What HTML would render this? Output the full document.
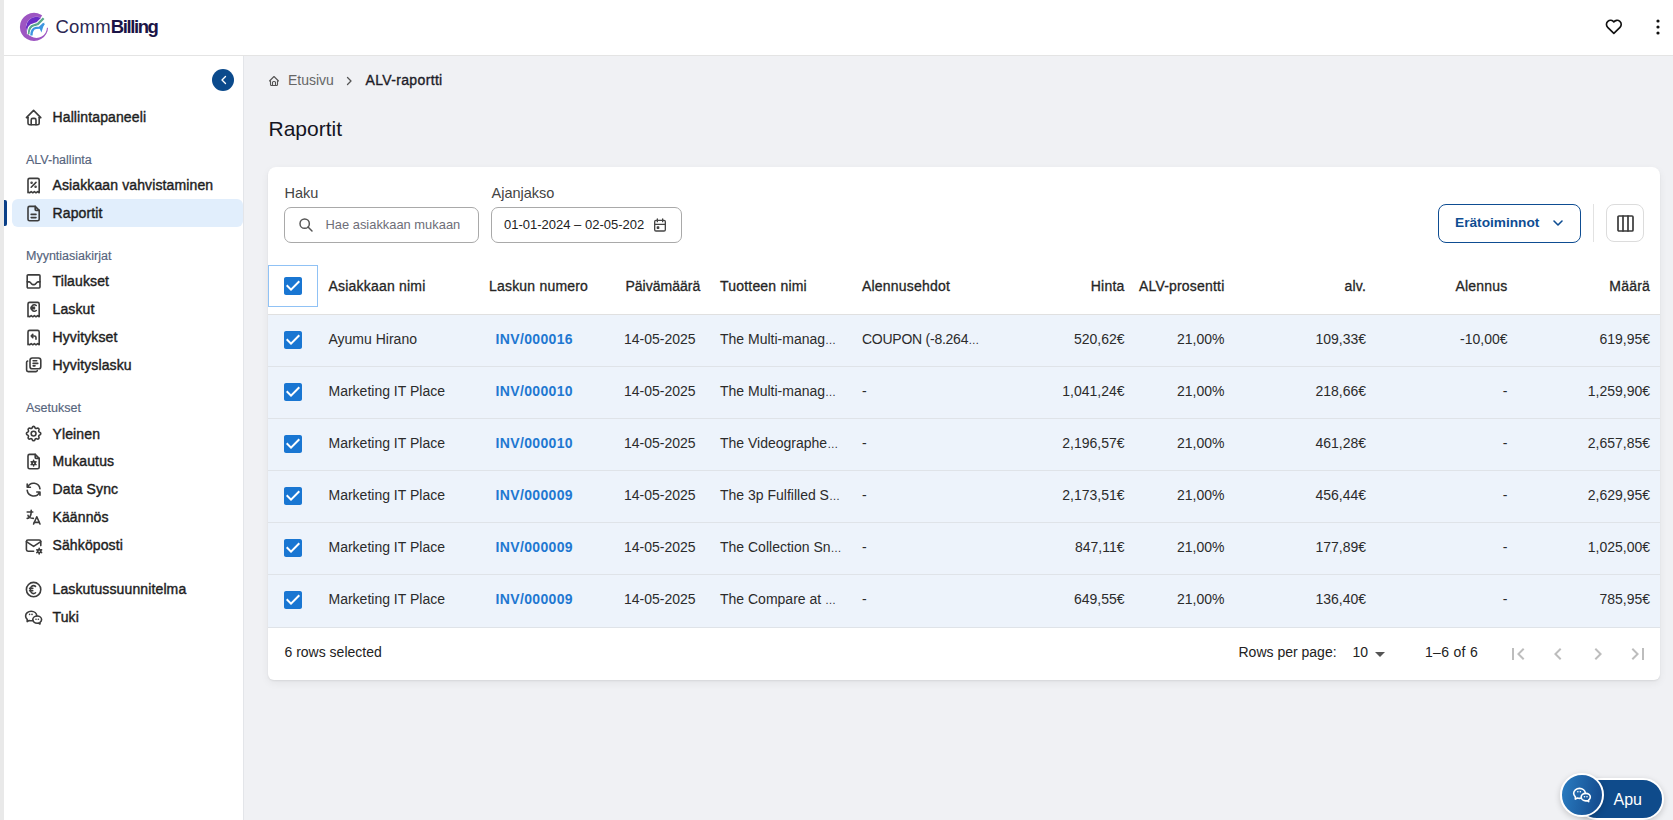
<!DOCTYPE html>
<html><head><meta charset="utf-8">
<style>
*{box-sizing:border-box;margin:0;padding:0}
html,body{width:1673px;height:820px;overflow:hidden;background:#fff;font-family:"Liberation Sans",sans-serif;color:#222;position:relative}
.t{position:absolute;white-space:nowrap}
.i{position:absolute;display:block;overflow:visible}
.b{position:absolute}
</style></head><body>
<div class="b" style="left:0;top:0;width:4px;height:820px;background:#e9e9e9"></div>
<div class="b" style="left:4px;top:0;width:1669px;height:55px;background:#fff"></div>
<div class="b" style="left:4px;top:55px;width:1669px;height:1px;background:#e4e4e4"></div>
<div class="b" style="left:4px;top:56px;width:239px;height:764px;background:#fff"></div>
<div class="b" style="left:243px;top:56px;width:1px;height:764px;background:#e3e5e9"></div>
<div class="b" style="left:244px;top:56px;width:1429px;height:764px;background:#f0f1f4"></div>
<svg class="i" style="left:19px;top:12px" width="30" height="30" viewBox="0 0 30 30">
<defs><clipPath id="ic"><circle cx="17.45" cy="15.35" r="10.55"/></clipPath>
<mask id="rm"><rect x="-5" y="-5" width="40" height="40" fill="#fff"/><path d="M15 14.9 L24.6 1.5 L40 0 L40 16.5 Z" fill="#000"/></mask></defs>
<g mask="url(#rm)"><path fill-rule="evenodd" fill="#9d55c2" d="M15 0.8a14.1 14.1 0 1 0 0.001 0Z M17.45 4.8a10.55 10.55 0 1 1 -0.001 0Z"/></g>
<g clip-path="url(#ic)"><path fill="#6b2dc6" d="M0 0 L24 0 L25 5.5 L19 11.9 L14.6 13.3 C11.5 14 10.6 16.5 9.8 22 L0 24 Z"/></g>
<path d="M9.9 22.2 C9.9 17 11.5 13.8 14.8 13.3 L18.8 12.1 L24.6 6.3" fill="none" stroke="#fff" stroke-width="4.2" stroke-linejoin="round"/>
<path d="M9.9 22.2 C9.9 17 11.5 13.8 14.8 13.3 L18.8 12.1 L24.6 6.3" fill="none" stroke="#5aa88b" stroke-width="2.3" stroke-linejoin="round"/>
<path d="M12.4 23.6 C12.4 19.2 13.8 16.4 17 15.9 L20.8 15.6 L25 11.6" fill="none" stroke="#fff" stroke-width="4" stroke-linejoin="round"/>
<path d="M12.4 23.6 C12.4 19.2 13.8 16.4 17 15.9 L20.8 15.6 L25 11.6" fill="none" stroke="#3d95e0" stroke-width="2.4" stroke-linejoin="round"/>
<path d="M20 15 L25.6 10.6 L22.4 20.6 Z" fill="#3d95e0"/>
</svg>
<div class="t" style="left:55.5px;top:15.59px;font-size:18.5px;line-height:22px;color:#1b1446;font-weight:normal;"><span style="color:#2c2752;letter-spacing:0.2px">Comm</span><b style="font-weight:bold;letter-spacing:-1.4px">Billing</b></div>
<svg class="i" style="left:1604.1px;top:17.1px;" width="19.7" height="19.7" viewBox="0 0 24 24" fill="none" stroke="#111" stroke-width="2" stroke-linecap="round" stroke-linejoin="round"><path d="M19.5 12.572l-7.5 7.428l-7.5 -7.428a5 5 0 1 1 7.5 -6.566a5 5 0 1 1 7.5 6.572"/></svg>
<svg class="i" style="left:1646px;top:15px" width="24" height="24" viewBox="0 0 24 24" fill="#111"><circle cx="12" cy="6" r="1.6"/><circle cx="12" cy="12" r="1.6"/><circle cx="12" cy="18" r="1.6"/></svg>
<div class="b" style="left:212px;top:69px;width:22px;height:22px;border-radius:50%;background:#0b4a8c"></div>
<svg class="i" style="left:217.8px;top:74px;" width="12" height="12" viewBox="0 0 12 12" fill="none" stroke="#fff" stroke-width="1.35" stroke-linecap="round" stroke-linejoin="round"><path d="M7.5 2.5 L4 6 L7.5 9.5"/></svg>
<div class="b" style="left:12px;top:199px;width:231px;height:28px;border-radius:6px;background:#e1eefc"></div>
<div class="b" style="left:4px;top:200px;width:3px;height:26px;border-radius:0 2px 2px 0;background:#0a3f87"></div>
<div class="t" style="left:52.5px;top:108.65px;font-size:14px;line-height:17px;color:#1e1e1e;font-weight:normal;-webkit-text-stroke:0.4px #1e1e1e;letter-spacing:0.12px;">Hallintapaneeli</div>
<div class="t" style="left:26px;top:152.67px;font-size:12.5px;line-height:15px;color:#56647d;font-weight:normal;-webkit-text-stroke:0.15px #56647d;">ALV-hallinta</div>
<div class="t" style="left:52.5px;top:176.65px;font-size:14px;line-height:17px;color:#1e1e1e;font-weight:normal;-webkit-text-stroke:0.4px #1e1e1e;letter-spacing:0.12px;">Asiakkaan vahvistaminen</div>
<div class="t" style="left:52.5px;top:204.65px;font-size:14px;line-height:17px;color:#1e1e1e;font-weight:normal;-webkit-text-stroke:0.4px #1e1e1e;letter-spacing:0.12px;">Raportit</div>
<div class="t" style="left:26px;top:248.97px;font-size:12.5px;line-height:15px;color:#56647d;font-weight:normal;-webkit-text-stroke:0.15px #56647d;">Myyntiasiakirjat</div>
<div class="t" style="left:52.5px;top:272.65px;font-size:14px;line-height:17px;color:#1e1e1e;font-weight:normal;-webkit-text-stroke:0.4px #1e1e1e;letter-spacing:0.12px;">Tilaukset</div>
<div class="t" style="left:52.5px;top:300.65px;font-size:14px;line-height:17px;color:#1e1e1e;font-weight:normal;-webkit-text-stroke:0.4px #1e1e1e;letter-spacing:0.12px;">Laskut</div>
<div class="t" style="left:52.5px;top:328.65px;font-size:14px;line-height:17px;color:#1e1e1e;font-weight:normal;-webkit-text-stroke:0.4px #1e1e1e;letter-spacing:0.12px;">Hyvitykset</div>
<div class="t" style="left:52.5px;top:356.65px;font-size:14px;line-height:17px;color:#1e1e1e;font-weight:normal;-webkit-text-stroke:0.4px #1e1e1e;letter-spacing:0.12px;">Hyvityslasku</div>
<div class="t" style="left:26px;top:401.37px;font-size:12.5px;line-height:15px;color:#56647d;font-weight:normal;-webkit-text-stroke:0.15px #56647d;">Asetukset</div>
<div class="t" style="left:52.5px;top:425.65px;font-size:14px;line-height:17px;color:#1e1e1e;font-weight:normal;-webkit-text-stroke:0.4px #1e1e1e;letter-spacing:0.12px;">Yleinen</div>
<div class="t" style="left:52.5px;top:453.15px;font-size:14px;line-height:17px;color:#1e1e1e;font-weight:normal;-webkit-text-stroke:0.4px #1e1e1e;letter-spacing:0.12px;">Mukautus</div>
<div class="t" style="left:52.5px;top:480.95px;font-size:14px;line-height:17px;color:#1e1e1e;font-weight:normal;-webkit-text-stroke:0.4px #1e1e1e;letter-spacing:0.12px;">Data Sync</div>
<div class="t" style="left:52.5px;top:508.85px;font-size:14px;line-height:17px;color:#1e1e1e;font-weight:normal;-webkit-text-stroke:0.4px #1e1e1e;letter-spacing:0.12px;">Käännös</div>
<div class="t" style="left:52.5px;top:537.05px;font-size:14px;line-height:17px;color:#1e1e1e;font-weight:normal;-webkit-text-stroke:0.4px #1e1e1e;letter-spacing:0.12px;">Sähköposti</div>
<div class="t" style="left:52.5px;top:581.15px;font-size:14px;line-height:17px;color:#1e1e1e;font-weight:normal;-webkit-text-stroke:0.4px #1e1e1e;letter-spacing:0.12px;">Laskutussuunnitelma</div>
<div class="t" style="left:52.5px;top:609.35px;font-size:14px;line-height:17px;color:#1e1e1e;font-weight:normal;-webkit-text-stroke:0.4px #1e1e1e;letter-spacing:0.12px;">Tuki</div>
<svg class="i" style="left:24.2px;top:107.9px;" width="19.2" height="19.2" viewBox="0 0 24 24" fill="none" stroke="#3c3c3c" stroke-width="2.0000000000000004" stroke-linecap="round" stroke-linejoin="round"><path d="M5 12l-2 0l9 -9l9 9l-2 0"/><path d="M5 12v7a2 2 0 0 0 2 2h10a2 2 0 0 0 2 -2v-7"/><path d="M9 21v-6a2 2 0 0 1 2 -2h2a2 2 0 0 1 2 2v6"/></svg>
<svg class="i" style="left:24.2px;top:175.9px;" width="19.2" height="19.2" viewBox="0 0 24 24" fill="none" stroke="#3c3c3c" stroke-width="2.0000000000000004" stroke-linecap="round" stroke-linejoin="round"><path d="M5 21v-16a2 2 0 0 1 2 -2h10a2 2 0 0 1 2 2v16l-2 -1.5l-2 1.5l-2 -1.5l-2 1.5l-2 -1.5l-2 1.5l-2 -1.5z"/><path d="M9 14l6 -6"/><circle cx="9.5" cy="8.5" r=".6" fill="#3c3c3c"/><circle cx="14.5" cy="13.5" r=".6" fill="#3c3c3c"/></svg>
<svg class="i" style="left:24.2px;top:203.9px;" width="19.2" height="19.2" viewBox="0 0 24 24" fill="none" stroke="#3c3c3c" stroke-width="2.0000000000000004" stroke-linecap="round" stroke-linejoin="round"><path d="M14 3v4a1 1 0 0 0 1 1h4"/><path d="M17 21h-10a2 2 0 0 1 -2 -2v-14a2 2 0 0 1 2 -2h7l5 5v11a2 2 0 0 1 -2 2z"/><path d="M9 17h6"/><path d="M9 13h6"/></svg>
<svg class="i" style="left:24.2px;top:271.9px;" width="19.2" height="19.2" viewBox="0 0 24 24" fill="none" stroke="#3c3c3c" stroke-width="2.0000000000000004" stroke-linecap="round" stroke-linejoin="round"><path d="M5.2 3.6h13.6a1.2 1.2 0 0 1 1.2 1.2v14a1.2 1.2 0 0 1 -1.2 1.2h-13.6a1.2 1.2 0 0 1 -1.2 -1.2v-14a1.2 1.2 0 0 1 1.2 -1.2z"/><path d="M4 12.3h2.6c1 0 1.5 .8 2.2 1.8c.7 1 1.3 1.7 2.3 1.7h1.8c1 0 1.6 -.7 2.3 -1.7c.7 -1 1.2 -1.8 2.2 -1.8h2.6"/></svg>
<svg class="i" style="left:24.2px;top:299.9px;" width="19.2" height="19.2" viewBox="0 0 24 24" fill="none" stroke="#3c3c3c" stroke-width="2.0000000000000004" stroke-linecap="round" stroke-linejoin="round"><path d="M5 21v-16a2 2 0 0 1 2 -2h10a2 2 0 0 1 2 2v16l-2 -1.5l-2 1.5l-2 -1.5l-2 1.5l-2 -1.5l-2 1.5l-2 -1.5z"/><path d="M15.3 6.9a3.6 4.1 0 1 0 0 6.2"/><path d="M8.8 9.1h4.4"/><path d="M8.8 11h4.4"/></svg>
<svg class="i" style="left:24.2px;top:327.9px;" width="19.2" height="19.2" viewBox="0 0 24 24" fill="none" stroke="#3c3c3c" stroke-width="2.0000000000000004" stroke-linecap="round" stroke-linejoin="round"><path d="M5 21v-16a2 2 0 0 1 2 -2h10a2 2 0 0 1 2 2v16l-2 -1.5l-2 1.5l-2 -1.5l-2 1.5l-2 -1.5l-2 1.5l-2 -1.5z"/><path d="M15 14v-2a2 2 0 0 0 -2 -2h-4l2 -2m0 4l-2 -2"/></svg>
<svg class="i" style="left:24.2px;top:355.9px;" width="19.2" height="19.2" viewBox="0 0 24 24" fill="none" stroke="#3c3c3c" stroke-width="2.0000000000000004" stroke-linecap="round" stroke-linejoin="round"><path d="M10.5 2.5h7.5a3 3 0 0 1 3 3v7.5a3 3 0 0 1 -3 3h-7.5a3 3 0 0 1 -3 -3v-7.5a3 3 0 0 1 3 -3z"/><path d="M4.6 6.2a2 2 0 0 0 -1.35 1.8v9.6a2 2 0 0 0 2 2h9.6a2 2 0 0 0 1.8 -1.35"/><path d="M11.4 6h4.5"/><path d="M11.4 9.25h5.8"/><path d="M11.4 12.3h2.4"/></svg>
<svg class="i" style="left:24.2px;top:423.9px;" width="19.2" height="19.2" viewBox="0 0 24 24" fill="none" stroke="#3c3c3c" stroke-width="2.0000000000000004" stroke-linecap="round" stroke-linejoin="round"><path d="M10.325 4.317c.426 -1.756 2.924 -1.756 3.35 0a1.724 1.724 0 0 0 2.573 1.066c1.543 -.94 3.31 .826 2.37 2.37a1.724 1.724 0 0 0 1.065 2.572c1.756 .426 1.756 2.924 0 3.35a1.724 1.724 0 0 0 -1.066 2.573c.94 1.543 -.826 3.31 -2.37 2.37a1.724 1.724 0 0 0 -2.572 1.065c-.426 1.756 -2.924 1.756 -3.35 0a1.724 1.724 0 0 0 -2.573 -1.066c-1.543 .94 -3.31 -.826 -2.37 -2.37a1.724 1.724 0 0 0 -1.065 -2.572c-1.756 -.426 -1.756 -2.924 0 -3.35a1.724 1.724 0 0 0 1.066 -2.573c-.94 -1.543 .826 -3.31 2.37 -2.37c1 .608 2.296 .07 2.572 -1.065z"/><circle cx="12" cy="12" r="3"/></svg>
<svg class="i" style="left:24.2px;top:451.9px;" width="19.2" height="19.2" viewBox="0 0 24 24" fill="none" stroke="#3c3c3c" stroke-width="2.0000000000000004" stroke-linecap="round" stroke-linejoin="round"><path d="M14 3v4a1 1 0 0 0 1 1h4"/><path d="M17 21h-10a2 2 0 0 1 -2 -2v-14a2 2 0 0 1 2 -2h7l5 5v11a2 2 0 0 1 -2 2z"/><path d="M12 14m-2 0a2 2 0 1 0 4 0a2 2 0 1 0 -4 0"/><path d="M12 10.5v1.5M12 16v1.5M15.031 12.25l-1.299 .75M10.268 15l-1.3 .75M15 15.803l-1.285 -.773M10.285 12.97l-1.285 -.773"/></svg>
<svg class="i" style="left:24.2px;top:479.9px;" width="19.2" height="19.2" viewBox="0 0 24 24" fill="none" stroke="#3c3c3c" stroke-width="2.0000000000000004" stroke-linecap="round" stroke-linejoin="round"><path d="M20 11a8.1 8.1 0 0 0 -15.5 -2m-.5 -4v4h4"/><path d="M4 13a8.1 8.1 0 0 0 15.5 2m.5 4v-4h-4"/></svg>
<svg class="i" style="left:24.2px;top:507.9px;" width="19.2" height="19.2" viewBox="0 0 24 24" fill="none" stroke="#3c3c3c" stroke-width="2.0000000000000004" stroke-linecap="round" stroke-linejoin="round"><path d="M4 5h7"/><path d="M9 3v2c0 4.418 -2.239 8 -5 8"/><path d="M5 9c0 2.144 2.952 3.908 6.7 4"/><path d="M12 20l4 -9l4 9"/><path d="M19.1 18h-6.2"/></svg>
<svg class="i" style="left:24.2px;top:535.9px;" width="19.2" height="19.2" viewBox="0 0 24 24" fill="none" stroke="#3c3c3c" stroke-width="2.0000000000000004" stroke-linecap="round" stroke-linejoin="round"><path d="M12 19h-7a2 2 0 0 1 -2 -2v-10a2 2 0 0 1 2 -2h14a2 2 0 0 1 2 2v5"/><path d="M3 7l9 6l9 -6"/><path d="M19.001 19m-2 0a2 2 0 1 0 4 0a2 2 0 1 0 -4 0"/><path d="M19.001 15.5v1.5M19.001 21v1.5M22.032 17.25l-1.299 .75M17.27 20l-1.3 .75M15.97 17.25l1.3 .75M20.733 20l1.3 .75"/></svg>
<svg class="i" style="left:24.2px;top:579.9px;" width="19.2" height="19.2" viewBox="0 0 24 24" fill="none" stroke="#3c3c3c" stroke-width="2.0000000000000004" stroke-linecap="round" stroke-linejoin="round"><circle cx="12" cy="12" r="9"/><path d="M14.401 8c-.669 -.628 -1.5 -1 -2.401 -1c-2.21 0 -4 2.239 -4 5s1.79 5 4 5c.9 0 1.731 -.372 2.4 -1"/><path d="M7 10.5h4"/><path d="M7 13.5h4"/></svg>
<svg class="i" style="left:24.2px;top:607.9px;" width="19.2" height="19.2" viewBox="0 0 24 24" fill="none" stroke="#3c3c3c" stroke-width="2.0000000000000004" stroke-linecap="round" stroke-linejoin="round"><path d="M16.5 10c3.038 0 5.5 2.015 5.5 4.5c0 1.397 -.778 2.645 -2 3.47l0 2.03l-1.964 -1.178a6.649 6.649 0 0 1 -1.536 .178c-3.038 0 -5.5 -2.015 -5.5 -4.5s2.462 -4.5 5.5 -4.5z"/><path d="M11.197 15.698c-.69 .196 -1.43 .302 -2.197 .302a8.008 8.008 0 0 1 -2.612 -.432l-2.388 1.432v-2.801c-1.237 -1.082 -2 -2.564 -2 -4.199c0 -3.314 3.134 -6 7 -6c3.782 0 6.863 2.57 7 5.785l0 .233"/><path d="M10 8h.01"/><path d="M7 8h.01"/><path d="M15 14h.01"/><path d="M18 14h.01"/></svg>
<svg class="i" style="left:268px;top:74.5px;" width="12" height="12" viewBox="0 0 24 24" fill="none" stroke="#555" stroke-width="2.2" stroke-linecap="round" stroke-linejoin="round"><path d="M5 12l-2 0l9 -9l9 9l-2 0"/><path d="M5 12v7a2 2 0 0 0 2 2h10a2 2 0 0 0 2 -2v-7"/><path d="M9 21v-6a2 2 0 0 1 2 -2h2a2 2 0 0 1 2 2v6"/></svg>
<div class="t" style="left:288px;top:71.85px;font-size:14px;line-height:17px;color:#666;font-weight:normal;">Etusivu</div>
<svg class="i" style="left:343px;top:74.6px;" width="12" height="12" viewBox="0 0 12 12" fill="none" stroke="#555" stroke-width="1.3" stroke-linecap="round" stroke-linejoin="round"><path d="M4.5 2.5 L8 6 L4.5 9.5"/></svg>
<div class="t" style="left:365.5px;top:71.85px;font-size:14px;line-height:17px;color:#1c1c28;font-weight:normal;-webkit-text-stroke:0.35px #1c1c28;letter-spacing:0.35px;">ALV-raportti</div>
<div class="t" style="left:268.5px;top:116.22px;font-size:21px;line-height:25px;color:#15151f;font-weight:normal;">Raportit</div>
<div class="b" style="left:268px;top:167px;width:1392px;height:513px;background:#fff;border-radius:8px 8px 6px 6px;box-shadow:0 1px 2px rgba(0,0,0,.07),0 3px 8px rgba(0,0,0,.06)"></div>
<div class="t" style="left:284.5px;top:184.98px;font-size:14.5px;line-height:17px;color:#444;font-weight:normal;">Haku</div>
<div class="t" style="left:491.5px;top:184.98px;font-size:14.5px;line-height:17px;color:#444;font-weight:normal;">Ajanjakso</div>
<div class="b" style="left:284px;top:207px;width:195px;height:36px;border:1px solid #a9a9a9;border-radius:7px"></div>
<svg class="i" style="left:297.5px;top:216.6px;" width="16" height="16" viewBox="0 0 24 24" fill="none" stroke="#555" stroke-width="2.2" stroke-linecap="round" stroke-linejoin="round"><path d="M10 10m-7 0a7 7 0 1 0 14 0a7 7 0 1 0 -14 0"/><path d="M21 21l-6 -6"/></svg>
<div class="t" style="left:325.5px;top:217.43px;font-size:12.9px;line-height:15px;color:#6e6e78;font-weight:normal;">Hae asiakkaan mukaan</div>
<div class="b" style="left:491px;top:207px;width:191px;height:36px;border:1px solid #a9a9a9;border-radius:7px"></div>
<div class="t" style="left:504px;top:216.90px;font-size:13px;line-height:16px;color:#222;font-weight:normal;">01-01-2024 – 02-05-202</div>
<svg class="i" style="left:652px;top:217px;" width="16" height="16" viewBox="0 0 24 24" fill="none" stroke="#444" stroke-width="2" stroke-linecap="round" stroke-linejoin="round"><path d="M4 7a2 2 0 0 1 2 -2h12a2 2 0 0 1 2 2v12a2 2 0 0 1 -2 2h-12a2 2 0 0 1 -2 -2z"/><path d="M16 3v4"/><path d="M8 3v4"/><path d="M4 11h16"/><path d="M8 15h2v2h-2z"/></svg>
<div class="b" style="left:1438px;top:204px;width:143px;height:39px;border:1.5px solid #0e4d92;border-radius:8px"></div>
<div class="t" style="left:1455px;top:214.85px;font-size:13.7px;line-height:16px;color:#0e4d92;font-weight:bold;">Erätoiminnot</div>
<svg class="i" style="left:1550px;top:214.6px;" width="16" height="16" viewBox="0 0 24 24" fill="none" stroke="#0e4d92" stroke-width="2.4" stroke-linecap="round" stroke-linejoin="round"><path d="M6 9l6 6l6 -6"/></svg>
<div class="b" style="left:1593px;top:204px;width:1px;height:38px;background:#e2e2e2"></div>
<div class="b" style="left:1606px;top:204px;width:38px;height:38px;border:1px solid #dcdcdc;border-radius:8px"></div>
<svg class="i" style="left:1616.5px;top:214.5px;" width="17" height="17" viewBox="0 0 17 17" fill="none" stroke="#3a3a3a" stroke-width="1.7" stroke-linecap="round" stroke-linejoin="round"><rect x="1" y="1" width="15" height="15" rx="1"/><path d="M6 1v15M11 1v15"/></svg>
<div class="b" style="left:268px;top:265px;width:50px;height:42px;border:1px solid #90c2f5"></div>
<div class="b" style="left:268px;top:314px;width:1392px;height:1px;background:#e0e0e0"></div>
<svg class="i" style="left:281px;top:274px" width="24" height="24" viewBox="0 0 24 24"><rect x="4" y="4" width="16" height="16" fill="#fff"/><path fill="#1976d2" d="M19 3H5c-1.11 0-2 .9-2 2v14c0 1.1.89 2 2 2h14c1.11 0 2-.9 2-2V5c0-1.1-.89-2-2-2zm-9 14l-5-5 1.41-1.41L10 14.17l7.59-7.59L19 8l-9 9z"/></svg>
<div class="t" style="left:328.5px;top:278.15px;font-size:14px;line-height:17px;color:#262626;font-weight:normal;-webkit-text-stroke:0.3px #262626;letter-spacing:0.2px;">Asiakkaan nimi</div>
<div class="t" style="left:489px;top:278.15px;font-size:14px;line-height:17px;color:#262626;font-weight:normal;-webkit-text-stroke:0.3px #262626;letter-spacing:0.2px;">Laskun numero</div>
<div class="t" style="left:625.5px;top:278.15px;font-size:14px;line-height:17px;color:#262626;font-weight:normal;-webkit-text-stroke:0.3px #262626;">Päivämäärä</div>
<div class="t" style="left:720px;top:278.15px;font-size:14px;line-height:17px;color:#262626;font-weight:normal;-webkit-text-stroke:0.3px #262626;letter-spacing:0.2px;">Tuotteen nimi</div>
<div class="t" style="left:862px;top:278.15px;font-size:14px;line-height:17px;color:#262626;font-weight:normal;-webkit-text-stroke:0.3px #262626;letter-spacing:0.2px;">Alennusehdot</div>
<div class="t" style="left:524.5px;width:600px;text-align:right;top:278.15px;font-size:14px;line-height:17px;color:#262626;font-weight:normal;-webkit-text-stroke:0.3px #262626;letter-spacing:0.2px;">Hinta</div>
<div class="t" style="left:624.5px;width:600px;text-align:right;top:278.15px;font-size:14px;line-height:17px;color:#262626;font-weight:normal;-webkit-text-stroke:0.3px #262626;letter-spacing:0.2px;">ALV-prosentti</div>
<div class="t" style="left:766px;width:600px;text-align:right;top:278.15px;font-size:14px;line-height:17px;color:#262626;font-weight:normal;-webkit-text-stroke:0.3px #262626;letter-spacing:0.2px;">alv.</div>
<div class="t" style="left:907.5px;width:600px;text-align:right;top:278.15px;font-size:14px;line-height:17px;color:#262626;font-weight:normal;-webkit-text-stroke:0.3px #262626;letter-spacing:0.2px;">Alennus</div>
<div class="t" style="left:1050px;width:600px;text-align:right;top:278.15px;font-size:14px;line-height:17px;color:#262626;font-weight:normal;-webkit-text-stroke:0.3px #262626;letter-spacing:0.2px;">Määrä</div>
<div class="b" style="left:268px;top:315px;width:1392px;height:51px;background:#edf3fb"></div>
<div class="b" style="left:268px;top:366px;width:1392px;height:1px;background:#dfe3e8"></div>
<svg class="i" style="left:281px;top:328px" width="24" height="24" viewBox="0 0 24 24"><rect x="4" y="4" width="16" height="16" fill="#fff"/><path fill="#1976d2" d="M19 3H5c-1.11 0-2 .9-2 2v14c0 1.1.89 2 2 2h14c1.11 0 2-.9 2-2V5c0-1.1-.89-2-2-2zm-9 14l-5-5 1.41-1.41L10 14.17l7.59-7.59L19 8l-9 9z"/></svg>
<div class="t" style="left:328.5px;top:330.65px;font-size:14px;line-height:17px;color:#2b2b2b;font-weight:normal;">Ayumu Hirano</div>
<div class="t" style="left:495.5px;top:330.65px;font-size:14px;line-height:17px;color:#1f78d1;font-weight:bold;letter-spacing:0.35px;">INV/000016</div>
<div class="t" style="left:624px;top:330.65px;font-size:14px;line-height:17px;color:#2b2b2b;font-weight:normal;">14-05-2025</div>
<div class="t" style="left:720px;top:330.65px;font-size:14px;line-height:17px;color:#2b2b2b;font-weight:normal;">The Multi-manag<span style="font-size:11px">…</span></div>
<div class="t" style="left:862px;top:330.65px;font-size:14px;line-height:17px;color:#2b2b2b;font-weight:normal;letter-spacing:-0.25px;">COUPON (-8.264<span style="font-size:11px">…</span></div>
<div class="t" style="left:524.5px;width:600px;text-align:right;top:330.65px;font-size:14px;line-height:17px;color:#2b2b2b;font-weight:normal;">520,62€</div>
<div class="t" style="left:624.5px;width:600px;text-align:right;top:330.65px;font-size:14px;line-height:17px;color:#2b2b2b;font-weight:normal;">21,00%</div>
<div class="t" style="left:766px;width:600px;text-align:right;top:330.65px;font-size:14px;line-height:17px;color:#2b2b2b;font-weight:normal;">109,33€</div>
<div class="t" style="left:907.5px;width:600px;text-align:right;top:330.65px;font-size:14px;line-height:17px;color:#2b2b2b;font-weight:normal;">-10,00€</div>
<div class="t" style="left:1050px;width:600px;text-align:right;top:330.65px;font-size:14px;line-height:17px;color:#2b2b2b;font-weight:normal;">619,95€</div>
<div class="b" style="left:268px;top:367px;width:1392px;height:51px;background:#edf3fb"></div>
<div class="b" style="left:268px;top:418px;width:1392px;height:1px;background:#dfe3e8"></div>
<svg class="i" style="left:281px;top:380px" width="24" height="24" viewBox="0 0 24 24"><rect x="4" y="4" width="16" height="16" fill="#fff"/><path fill="#1976d2" d="M19 3H5c-1.11 0-2 .9-2 2v14c0 1.1.89 2 2 2h14c1.11 0 2-.9 2-2V5c0-1.1-.89-2-2-2zm-9 14l-5-5 1.41-1.41L10 14.17l7.59-7.59L19 8l-9 9z"/></svg>
<div class="t" style="left:328.5px;top:382.65px;font-size:14px;line-height:17px;color:#2b2b2b;font-weight:normal;">Marketing IT Place</div>
<div class="t" style="left:495.5px;top:382.65px;font-size:14px;line-height:17px;color:#1f78d1;font-weight:bold;letter-spacing:0.35px;">INV/000010</div>
<div class="t" style="left:624px;top:382.65px;font-size:14px;line-height:17px;color:#2b2b2b;font-weight:normal;">14-05-2025</div>
<div class="t" style="left:720px;top:382.65px;font-size:14px;line-height:17px;color:#2b2b2b;font-weight:normal;">The Multi-manag<span style="font-size:11px">…</span></div>
<div class="t" style="left:862px;top:382.65px;font-size:14px;line-height:17px;color:#2b2b2b;font-weight:normal;">-</div>
<div class="t" style="left:524.5px;width:600px;text-align:right;top:382.65px;font-size:14px;line-height:17px;color:#2b2b2b;font-weight:normal;">1,041,24€</div>
<div class="t" style="left:624.5px;width:600px;text-align:right;top:382.65px;font-size:14px;line-height:17px;color:#2b2b2b;font-weight:normal;">21,00%</div>
<div class="t" style="left:766px;width:600px;text-align:right;top:382.65px;font-size:14px;line-height:17px;color:#2b2b2b;font-weight:normal;">218,66€</div>
<div class="t" style="left:907.5px;width:600px;text-align:right;top:382.65px;font-size:14px;line-height:17px;color:#2b2b2b;font-weight:normal;">-</div>
<div class="t" style="left:1050px;width:600px;text-align:right;top:382.65px;font-size:14px;line-height:17px;color:#2b2b2b;font-weight:normal;">1,259,90€</div>
<div class="b" style="left:268px;top:419px;width:1392px;height:51px;background:#edf3fb"></div>
<div class="b" style="left:268px;top:470px;width:1392px;height:1px;background:#dfe3e8"></div>
<svg class="i" style="left:281px;top:432px" width="24" height="24" viewBox="0 0 24 24"><rect x="4" y="4" width="16" height="16" fill="#fff"/><path fill="#1976d2" d="M19 3H5c-1.11 0-2 .9-2 2v14c0 1.1.89 2 2 2h14c1.11 0 2-.9 2-2V5c0-1.1-.89-2-2-2zm-9 14l-5-5 1.41-1.41L10 14.17l7.59-7.59L19 8l-9 9z"/></svg>
<div class="t" style="left:328.5px;top:434.65px;font-size:14px;line-height:17px;color:#2b2b2b;font-weight:normal;">Marketing IT Place</div>
<div class="t" style="left:495.5px;top:434.65px;font-size:14px;line-height:17px;color:#1f78d1;font-weight:bold;letter-spacing:0.35px;">INV/000010</div>
<div class="t" style="left:624px;top:434.65px;font-size:14px;line-height:17px;color:#2b2b2b;font-weight:normal;">14-05-2025</div>
<div class="t" style="left:720px;top:434.65px;font-size:14px;line-height:17px;color:#2b2b2b;font-weight:normal;">The Videographe<span style="font-size:11px">…</span></div>
<div class="t" style="left:862px;top:434.65px;font-size:14px;line-height:17px;color:#2b2b2b;font-weight:normal;">-</div>
<div class="t" style="left:524.5px;width:600px;text-align:right;top:434.65px;font-size:14px;line-height:17px;color:#2b2b2b;font-weight:normal;">2,196,57€</div>
<div class="t" style="left:624.5px;width:600px;text-align:right;top:434.65px;font-size:14px;line-height:17px;color:#2b2b2b;font-weight:normal;">21,00%</div>
<div class="t" style="left:766px;width:600px;text-align:right;top:434.65px;font-size:14px;line-height:17px;color:#2b2b2b;font-weight:normal;">461,28€</div>
<div class="t" style="left:907.5px;width:600px;text-align:right;top:434.65px;font-size:14px;line-height:17px;color:#2b2b2b;font-weight:normal;">-</div>
<div class="t" style="left:1050px;width:600px;text-align:right;top:434.65px;font-size:14px;line-height:17px;color:#2b2b2b;font-weight:normal;">2,657,85€</div>
<div class="b" style="left:268px;top:471px;width:1392px;height:51px;background:#edf3fb"></div>
<div class="b" style="left:268px;top:522px;width:1392px;height:1px;background:#dfe3e8"></div>
<svg class="i" style="left:281px;top:484px" width="24" height="24" viewBox="0 0 24 24"><rect x="4" y="4" width="16" height="16" fill="#fff"/><path fill="#1976d2" d="M19 3H5c-1.11 0-2 .9-2 2v14c0 1.1.89 2 2 2h14c1.11 0 2-.9 2-2V5c0-1.1-.89-2-2-2zm-9 14l-5-5 1.41-1.41L10 14.17l7.59-7.59L19 8l-9 9z"/></svg>
<div class="t" style="left:328.5px;top:486.65px;font-size:14px;line-height:17px;color:#2b2b2b;font-weight:normal;">Marketing IT Place</div>
<div class="t" style="left:495.5px;top:486.65px;font-size:14px;line-height:17px;color:#1f78d1;font-weight:bold;letter-spacing:0.35px;">INV/000009</div>
<div class="t" style="left:624px;top:486.65px;font-size:14px;line-height:17px;color:#2b2b2b;font-weight:normal;">14-05-2025</div>
<div class="t" style="left:720px;top:486.65px;font-size:14px;line-height:17px;color:#2b2b2b;font-weight:normal;">The 3p Fulfilled S<span style="font-size:11px">…</span></div>
<div class="t" style="left:862px;top:486.65px;font-size:14px;line-height:17px;color:#2b2b2b;font-weight:normal;">-</div>
<div class="t" style="left:524.5px;width:600px;text-align:right;top:486.65px;font-size:14px;line-height:17px;color:#2b2b2b;font-weight:normal;">2,173,51€</div>
<div class="t" style="left:624.5px;width:600px;text-align:right;top:486.65px;font-size:14px;line-height:17px;color:#2b2b2b;font-weight:normal;">21,00%</div>
<div class="t" style="left:766px;width:600px;text-align:right;top:486.65px;font-size:14px;line-height:17px;color:#2b2b2b;font-weight:normal;">456,44€</div>
<div class="t" style="left:907.5px;width:600px;text-align:right;top:486.65px;font-size:14px;line-height:17px;color:#2b2b2b;font-weight:normal;">-</div>
<div class="t" style="left:1050px;width:600px;text-align:right;top:486.65px;font-size:14px;line-height:17px;color:#2b2b2b;font-weight:normal;">2,629,95€</div>
<div class="b" style="left:268px;top:523px;width:1392px;height:51px;background:#edf3fb"></div>
<div class="b" style="left:268px;top:574px;width:1392px;height:1px;background:#dfe3e8"></div>
<svg class="i" style="left:281px;top:536px" width="24" height="24" viewBox="0 0 24 24"><rect x="4" y="4" width="16" height="16" fill="#fff"/><path fill="#1976d2" d="M19 3H5c-1.11 0-2 .9-2 2v14c0 1.1.89 2 2 2h14c1.11 0 2-.9 2-2V5c0-1.1-.89-2-2-2zm-9 14l-5-5 1.41-1.41L10 14.17l7.59-7.59L19 8l-9 9z"/></svg>
<div class="t" style="left:328.5px;top:538.65px;font-size:14px;line-height:17px;color:#2b2b2b;font-weight:normal;">Marketing IT Place</div>
<div class="t" style="left:495.5px;top:538.65px;font-size:14px;line-height:17px;color:#1f78d1;font-weight:bold;letter-spacing:0.35px;">INV/000009</div>
<div class="t" style="left:624px;top:538.65px;font-size:14px;line-height:17px;color:#2b2b2b;font-weight:normal;">14-05-2025</div>
<div class="t" style="left:720px;top:538.65px;font-size:14px;line-height:17px;color:#2b2b2b;font-weight:normal;">The Collection Sn<span style="font-size:11px">…</span></div>
<div class="t" style="left:862px;top:538.65px;font-size:14px;line-height:17px;color:#2b2b2b;font-weight:normal;">-</div>
<div class="t" style="left:524.5px;width:600px;text-align:right;top:538.65px;font-size:14px;line-height:17px;color:#2b2b2b;font-weight:normal;">847,11€</div>
<div class="t" style="left:624.5px;width:600px;text-align:right;top:538.65px;font-size:14px;line-height:17px;color:#2b2b2b;font-weight:normal;">21,00%</div>
<div class="t" style="left:766px;width:600px;text-align:right;top:538.65px;font-size:14px;line-height:17px;color:#2b2b2b;font-weight:normal;">177,89€</div>
<div class="t" style="left:907.5px;width:600px;text-align:right;top:538.65px;font-size:14px;line-height:17px;color:#2b2b2b;font-weight:normal;">-</div>
<div class="t" style="left:1050px;width:600px;text-align:right;top:538.65px;font-size:14px;line-height:17px;color:#2b2b2b;font-weight:normal;">1,025,00€</div>
<div class="b" style="left:268px;top:575px;width:1392px;height:51px;background:#edf3fb"></div>
<div class="b" style="left:268px;top:627px;width:1392px;height:1px;background:#dfe3e8"></div>
<div class="b" style="left:268px;top:626px;width:1392px;height:1px;background:#edf3fb"></div>
<svg class="i" style="left:281px;top:588px" width="24" height="24" viewBox="0 0 24 24"><rect x="4" y="4" width="16" height="16" fill="#fff"/><path fill="#1976d2" d="M19 3H5c-1.11 0-2 .9-2 2v14c0 1.1.89 2 2 2h14c1.11 0 2-.9 2-2V5c0-1.1-.89-2-2-2zm-9 14l-5-5 1.41-1.41L10 14.17l7.59-7.59L19 8l-9 9z"/></svg>
<div class="t" style="left:328.5px;top:590.65px;font-size:14px;line-height:17px;color:#2b2b2b;font-weight:normal;">Marketing IT Place</div>
<div class="t" style="left:495.5px;top:590.65px;font-size:14px;line-height:17px;color:#1f78d1;font-weight:bold;letter-spacing:0.35px;">INV/000009</div>
<div class="t" style="left:624px;top:590.65px;font-size:14px;line-height:17px;color:#2b2b2b;font-weight:normal;">14-05-2025</div>
<div class="t" style="left:720px;top:590.65px;font-size:14px;line-height:17px;color:#2b2b2b;font-weight:normal;">The Compare at <span style="font-size:11px">…</span></div>
<div class="t" style="left:862px;top:590.65px;font-size:14px;line-height:17px;color:#2b2b2b;font-weight:normal;">-</div>
<div class="t" style="left:524.5px;width:600px;text-align:right;top:590.65px;font-size:14px;line-height:17px;color:#2b2b2b;font-weight:normal;">649,55€</div>
<div class="t" style="left:624.5px;width:600px;text-align:right;top:590.65px;font-size:14px;line-height:17px;color:#2b2b2b;font-weight:normal;">21,00%</div>
<div class="t" style="left:766px;width:600px;text-align:right;top:590.65px;font-size:14px;line-height:17px;color:#2b2b2b;font-weight:normal;">136,40€</div>
<div class="t" style="left:907.5px;width:600px;text-align:right;top:590.65px;font-size:14px;line-height:17px;color:#2b2b2b;font-weight:normal;">-</div>
<div class="t" style="left:1050px;width:600px;text-align:right;top:590.65px;font-size:14px;line-height:17px;color:#2b2b2b;font-weight:normal;">785,95€</div>
<div class="t" style="left:284.5px;top:644.35px;font-size:14px;line-height:17px;color:#222;font-weight:normal;">6 rows selected</div>
<div class="t" style="left:1238.5px;top:644.35px;font-size:14px;line-height:17px;color:#222;font-weight:normal;">Rows per page:</div>
<div class="t" style="left:1352.5px;top:644.35px;font-size:14px;line-height:17px;color:#222;font-weight:normal;">10</div>
<svg class="i" style="left:1368px;top:642px" width="24" height="24" viewBox="0 0 24 24" fill="#555"><path d="M7 10l5 5 5-5z"/></svg>
<div class="t" style="left:1425px;top:644.35px;font-size:14px;line-height:17px;color:#222;font-weight:normal;letter-spacing:0.3px;">1–6 of 6</div>
<svg class="i" style="left:1506px;top:641.5px" width="24" height="24" viewBox="0 0 24 24" fill="#bdbdbd"><path d="M18.41 16.59L13.82 12l4.59-4.59L17 6l-6 6 6 6zM6 6h2v12H6z"/></svg>
<svg class="i" style="left:1546px;top:641.5px" width="24" height="24" viewBox="0 0 24 24" fill="#bdbdbd"><path d="M15.41 16.59L10.83 12l4.58-4.59L14 6l-6 6 6 6 1.41-1.41z"/></svg>
<svg class="i" style="left:1586px;top:641.5px" width="24" height="24" viewBox="0 0 24 24" fill="#bdbdbd"><path d="M8.59 16.59L13.17 12 8.59 7.41 10 6l6 6-6 6-1.41-1.41z"/></svg>
<svg class="i" style="left:1626px;top:641.5px" width="24" height="24" viewBox="0 0 24 24" fill="#bdbdbd"><path d="M5.59 7.41L10.18 12l-4.59 4.59L7 18l6-6-6-6zM16 6h2v12h-2z"/></svg>
<div class="b" style="left:1576px;top:777.5px;width:88px;height:42px;border-radius:21px;background:#0f4b8b;border:2px solid #fff;box-shadow:0 2px 6px rgba(0,0,0,.18)"></div>
<div class="t" style="left:1613.5px;top:790.46px;font-size:16px;line-height:19px;color:#fff;font-weight:normal;">Apu</div>
<div class="b" style="left:1559.5px;top:773px;width:44px;height:44px;border-radius:50%;background:linear-gradient(100deg,#2a7dc2,#164f92 85%);border:2px solid #fff;box-shadow:0 2px 6px rgba(0,0,0,.18)"></div>
<svg class="i" style="left:1571.5px;top:784.5px;" width="20" height="20" viewBox="0 0 24 24" fill="none" stroke="#fff" stroke-width="1.9" stroke-linecap="round" stroke-linejoin="round"><path d="M16.5 10c3.038 0 5.5 2.015 5.5 4.5c0 1.397 -.778 2.645 -2 3.47l0 2.03l-1.964 -1.178a6.649 6.649 0 0 1 -1.536 .178c-3.038 0 -5.5 -2.015 -5.5 -4.5s2.462 -4.5 5.5 -4.5z"/><path d="M11.197 15.698c-.69 .196 -1.43 .302 -2.197 .302a8.008 8.008 0 0 1 -2.612 -.432l-2.388 1.432v-2.801c-1.237 -1.082 -2 -2.564 -2 -4.199c0 -3.314 3.134 -6 7 -6c3.782 0 6.863 2.57 7 5.785l0 .233"/><path d="M10 8h.01"/><path d="M7 8h.01"/><path d="M15 14h.01"/><path d="M18 14h.01"/></svg>
</body></html>
